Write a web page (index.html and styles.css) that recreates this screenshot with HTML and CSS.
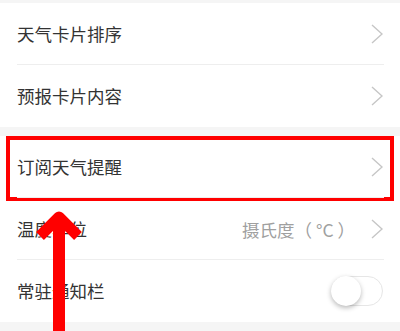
FILE: index.html
```html
<!DOCTYPE html>
<html lang="zh-CN">
<head>
  <meta charset="UTF-8" />
  <meta name="viewport" content="width=device-width, initial-scale=1.0"/>
  <title>设置</title>
  <link rel="stylesheet" href="styles.css">
</head>
<body>
  <div class="group first">
    <div class="row">
      <span class="label">天气卡片排序</span>
      <svg class="chevron" viewBox="0 0 12 20"><path d="M1 1 L11 10 L1 19" /></svg>
    </div>
    <div class="row">
      <span class="label">预报卡片内容</span>
      <svg class="chevron" viewBox="0 0 12 20"><path d="M1 1 L11 10 L1 19" /></svg>
    </div>
  </div>

  <div class="group">
    <div class="row highlighted">
      <span class="label">订阅天气提醒</span>
      <svg class="chevron" viewBox="0 0 12 20"><path d="M1 1 L11 10 L1 19" /></svg>
      <div class="mark"></div>
    </div>
    <div class="row">
      <span class="label">温度单位</span>
      <span class="value">摄氏度（ °C ）</span>
      <svg class="chevron" viewBox="0 0 12 20"><path d="M1 1 L11 10 L1 19" /></svg>
    </div>
    <div class="row">
      <span class="label">常驻通知栏</span>
      <div class="switch"><div class="knob"></div></div>
    </div>
  </div>

  <svg class="arrow" viewBox="0 0 46 120">
    <rect x="17" y="8" width="12" height="120" />
    <path d="M4 23 L23 4 L42 23" />
  </svg>
</body>
</html>
```

FILE: styles.css
```css
body {
  margin: 0;
  background: #f5f5f5;
  font-family: 'Noto Sans CJK SC', 'Noto Sans', sans-serif;
  color: #333;
  height: 331px;
  overflow: hidden;
  position: relative;
}

.group {
  background: #fff;
  margin-top: 9px;
}

.group.first {
  margin-top: 3px;
}

.row {
  height: 62px;
  display: flex;
  align-items: center;
  padding: 0 17px;
  position: relative;
}

.row + .row::before {
  content: "";
  position: absolute;
  top: -1px;
  left: 17px;
  right: 16px;
  height: 1px;
  background: #eeeeee;
}

.label {
  flex: 1;
  font-size: 17.5px;
  line-height: 1;
}

.value {
  font-size: 17.5px;
  color: #a0a0a0;
  margin-right: 16px;
}

.chevron {
  width: 12px;
  height: 20px;
  fill: none;
  stroke: #c6c6c6;
  stroke-width: 1.4;
}

.mark {
  position: absolute;
  left: 6px;
  right: 6px;
  top: 0;
  bottom: -3px;
  border: 4px solid #ff0000;
}

.switch {
  width: 52px;
  height: 30px;
  border: 1px solid #e6e6e6;
  border-radius: 16px;
  box-sizing: border-box;
  position: relative;
}

.knob {
  position: absolute;
  left: -1px;
  top: -1px;
  width: 30px;
  height: 30px;
  border-radius: 50%;
  background: #fff;
  box-shadow: 0 2px 5px rgba(0,0,0,0.28);
}

.arrow {
  position: absolute;
  left: 36px;
  top: 213px;
  width: 46px;
  height: 120px;
  overflow: visible;
}

.arrow rect {
  fill: #ff0000;
}

.arrow path {
  fill: none;
  stroke: #ff0000;
  stroke-width: 11;
  stroke-linejoin: round;
}
```
